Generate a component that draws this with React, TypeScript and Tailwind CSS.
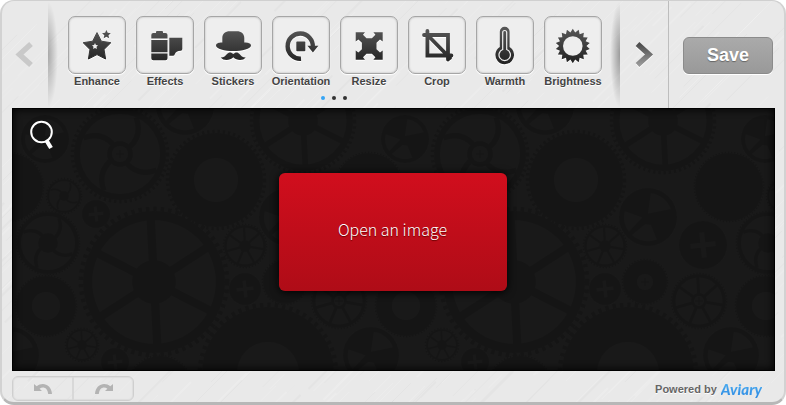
import React from "react";

const INK = "url(#ink)";

function starPoints(cx: number, cy: number, outer: number, inner: number) {
  return Array.from({ length: 10 }, (_, i) => {
    const r = i % 2 ? inner : outer;
    const a = -Math.PI / 2 + (i * Math.PI) / 5;
    return `${(cx + r * Math.cos(a)).toFixed(2)},${(cy + r * Math.sin(a)).toFixed(2)}`;
  }).join(" ");
}

function burstPoints(cx: number, cy: number, outer: number, inner: number, teeth: number) {
  return Array.from({ length: teeth * 2 }, (_, i) => {
    const r = i % 2 ? inner : outer;
    const a = -Math.PI / 2 + (i * Math.PI) / teeth;
    return `${(cx + r * Math.cos(a)).toFixed(2)},${(cy + r * Math.sin(a)).toFixed(2)}`;
  }).join(" ");
}

const tools: { name: string; art: React.ReactNode }[] = [
  {
    name: "Enhance",
    art: (
      <>
        <polygon points={starPoints(29, 31.2, 14.6, 7.4)} stroke={INK} strokeWidth="1" strokeLinejoin="round" />
        <polygon points={starPoints(38.4, 18.6, 4.6, 2.2)} />
        <polygon points={starPoints(27, 30.3, 3.2, 1.6)} fill="#eee" />
      </>
    ),
  },
  {
    name: "Effects",
    art: (
      <>
        <path d="M20 17v-1q0-1 1-1h5q1 0 1 1v1h2.500q2 0 2 2v3.600H15.300V19q0-2 2-2zM15.300 24h16.200v12.200H15.300zM15.300 37.500h16.200v4.700q0 2-2 2H17.300q-2 0-2-2z" />
        <path d="M33.300 21.700h13V33q0 1.700-1.500 1.700-5 0-6 3.500-.5 1.500-2 1.500h-3.500z" />
      </>
    ),
  },
  {
    name: "Stickers",
    art: (
      <>
        <path d="M18.300 26.500V22c0-4 3-6.700 7.500-6.700h7c4.500 0 7.500 2.700 7.500 6.700v4.500c2-.2 6.700.3 6.700 3 0 3.500-9 5.500-17.700 5.500S12 33 12 29.500c0-2.700 4.300-3.200 6.300-3z" />
        <path d="M29.300 38c2-2.200 4.700-2 6.200 0 1.500 2 3 3.400 6.200 3.400-2.500 3.500-9 3.300-12.400-.2-3.400 3.500-10 3.700-12.500.2 3.200 0 4.700-1.400 6.200-3.400 1.600-2 4.300-2.200 6.300 0z" />
      </>
    ),
  },
  {
    name: "Orientation",
    art: (
      <>
        <path d="M29 42.700A12.600 12.600 0 1 1 40.800 31" fill="none" stroke={INK} strokeWidth="4.400" />
        <path d="M35.400 29.800h11l-5.500 6.800z" />
        <rect x="24.300" y="25.600" width="9" height="9.600" rx=".8" />
      </>
    ),
  },
  {
    name: "Resize",
    art: (
      <path d="M15.700 16.300h9.300l-2 2.500 3.500 3.500h5.400l3.500-3.500-2-2.500h9.300v9.200l-2.700-2-3.500 3.300v6.400l3.500 3.300 2.700-2v9.200h-9.300l2-2.500-3.500-3.500h-5.400l-3.500 3.500 2 2.500h-9.300v-9.200l2.700 2 3.500-3.300v-6.400l-3.500-3.300-2.700 2z" />
    ),
  },
  {
    name: "Crop",
    art: (
      <path
        d="M19.400 15v24.500h24M16 19h24v24.500M19.500 19L42 42"
        fill="none"
        stroke={INK}
        strokeWidth="3.800"
        strokeLinecap="round"
      />
    ),
  },
  {
    name: "Warmth",
    art: (
      <>
        <path d="M23.800 31V15.700a4.900 4.900 0 0 1 9.800 0V31a9.300 9.300 0 1 1-9.800 0z" />
        <path
          d="M26.700 33.500V16.500a2 2 0 0 1 4 0V33.500a5.700 5.700 0 1 1-4 0z"
          fill="none"
          stroke="#eee"
          strokeWidth="1.200"
        />
      </>
    ),
  },
  {
    name: "Brightness",
    art: (
      <>
        <polygon points={burstPoints(28.8, 30, 17.2, 13.7, 18)} />
        <circle cx="28.800" cy="30" r="9.800" fill="#eee" />
      </>
    ),
  },
];

type Gear = {
  x: number;
  y: number;
  r: number;
  kind: "solid" | "spokes" | "curved" | "pie" | "plus";
  hole?: number;
  hub?: number;
  n?: number;
};

const gears: Gear[] = [
  { x: 45, y: 139, r: 24, kind: "pie" },
  { x: 120, y: 154, r: 46, kind: "curved", hub: 13, hole: 8 },
  { x: 185, y: 106, r: 29, kind: "pie" },
  { x: 216, y: 180, r: 47, kind: "solid", hole: 22 },
  { x: 9, y: 187, r: 34, kind: "solid" },
  { x: 64, y: 196, r: 17, kind: "curved", hub: 5 },
  { x: 96, y: 214, r: 14, kind: "plus" },
  { x: 48, y: 243, r: 31, kind: "curved", hub: 10 },
  { x: 154, y: 282, r: 71, kind: "spokes", n: 6, hub: 22 },
  { x: 245, y: 246, r: 21, kind: "spokes", n: 7, hub: 6 },
  { x: 245, y: 289, r: 16, kind: "plus" },
  { x: 46, y: 306, r: 30, kind: "solid", hole: 14 },
  { x: 11, y: 355, r: 28, kind: "pie" },
  { x: 82, y: 345, r: 16, kind: "spokes", n: 7, hub: 5 },
  { x: 115, y: 362, r: 14, kind: "plus" },
  { x: 160, y: 388, r: 32, kind: "solid" },
  { x: 268, y: 373, r: 66, kind: "solid", hole: 31 },
  { x: 303, y: 121, r: 50, kind: "spokes", n: 6, hub: 15 },
  { x: 288, y: 217, r: 29, kind: "pie" },
  { x: 343, y: 245, r: 24, kind: "plus" },
  { x: 285, y: 282, r: 22, kind: "solid", hole: 8 },
  { x: 339, y: 301, r: 27, kind: "spokes", n: 7, hub: 8, hole: 5 },
];

const DARK = "#151515";
const BASE = "#191919";

function GearShape({ x, y, r, kind, hole, hub = 0, n = 4 }: Gear) {
  const toothed = kind !== "pie" && kind !== "plus";
  const depth = r > 60 ? 5 : r > 40 ? 4 : 2;
  const rim = r * 0.87;
  const spokeWidth = Math.max(2, r * 0.12);
  const pitch = r > 60 ? 7.2 : r > 40 ? 5 : 3;
  const teeth = Math.round((2 * Math.PI * r) / pitch);
  const step = (2 * Math.PI * (r + depth / 2)) / teeth;
  return (
    <g transform={`translate(${x} ${y})`}>
      {toothed && (
        <circle
          r={r + depth / 2 - 0.5}
          fill="none"
          stroke={DARK}
          strokeWidth={depth}
          strokeDasharray={`${step * 0.5} ${step * 0.5}`}
        />
      )}
      <circle r={r} fill={DARK} />
      {(kind === "spokes" || kind === "curved") && <circle r={rim} fill={BASE} />}
      {kind === "spokes" &&
        Array.from({ length: n }, (_, i) => (
          <path
            key={i}
            d={`M0 0V${-rim - 1}`}
            stroke={DARK}
            strokeWidth={spokeWidth}
            transform={`rotate(${(i * 360) / n - 3})`}
          />
        ))}
      {kind === "curved" &&
        Array.from({ length: 4 }, (_, i) => (
          <path
            key={i}
            d={`M0 0Q${rim * 0.62} ${-rim * 0.35} ${rim * 0.4} ${-rim * 0.92}`}
            fill="none"
            stroke={DARK}
            strokeWidth={spokeWidth}
            transform={`rotate(${i * 90})`}
          />
        ))}
      {kind === "pie" && (
        <g fill={BASE}>
          <path d={`M0 ${-r * 0.12}L${r * 0.1} ${-r * 0.82}A${r * 0.83} ${r * 0.83} 0 0 1 ${r * 0.78} ${-r * 0.28}z`} />
          <path d={`M${-r * 0.2} ${r * 0.02}L${-r * 0.8} ${-r * 0.2}A${r * 0.83} ${r * 0.83} 0 0 0 ${-r * 0.66} ${r * 0.5}z`} />
          <path d={`M${-r * 0.1} ${r * 0.25}L${-r * 0.55} ${r * 0.62}A${r * 0.83} ${r * 0.83} 0 0 0 ${r * 0.3} ${r * 0.78}L${r * 0.1} ${r * 0.28}z`} />
        </g>
      )}
      {kind === "plus" && (
        <path
          d={`M0 ${-r * 0.52}V${r * 0.52}M${-r * 0.52} 0H${r * 0.52}`}
          stroke={BASE}
          strokeWidth={r * 0.2}
          transform="rotate(-6)"
        />
      )}
      {hub > 0 && <circle r={hub} fill={DARK} />}
      {hole && <circle r={hole} fill={BASE} />}
      {hole && hole < 10 && <path d="M0 -4V4M-4 0H4" stroke={DARK} />}
    </g>
  );
}

function GearWallpaper() {
  return (
    <svg aria-hidden="true" className="absolute inset-0 h-full w-full">
      <defs>
        <pattern id="gears" x="-12" y="-108" width="360" height="420" patternUnits="userSpaceOnUse">
          {[-360, 0, 360].map((dx) => (
            <g key={dx} transform={`translate(${dx} 0)`}>
              {gears.map((g, i) => (
                <GearShape key={i} {...g} />
              ))}
            </g>
          ))}
        </pattern>
      </defs>
      <rect width="100%" height="100%" fill="url(#gears)" />
    </svg>
  );
}

function noise(n: number) {
  const v = Math.sin(n * 127.1) * 43758.5453;
  return v - Math.floor(v);
}

const streaks = Array.from({ length: 700 }, (_, i) => ({
  x: Math.round(noise(i + 1) * 820 - 30),
  y: Math.round(noise(i + 1001) * 450),
  len: 10 + Math.round(noise(i + 2001) * 45),
  light: noise(i + 3001) > 0.35,
}));

function BrushedMetal() {
  return (
    <svg
      aria-hidden="true"
      className="absolute inset-0 h-full w-full"
      viewBox="0 0 786 405"
      preserveAspectRatio="xMidYMid slice"
    >
      {streaks.map((s, i) => (
        <path
          key={i}
          d={`M${s.x} ${s.y}l${s.len} ${-s.len}`}
          stroke={s.light ? "#fff" : "#bbb"}
          strokeOpacity={s.light ? 0.17 : 0.1}
          strokeWidth={i % 5 === 0 ? 2 : 1}
        />
      ))}
    </svg>
  );
}

export default function App() {
  return (
    <div className="relative isolate flex min-h-screen w-full flex-col overflow-hidden rounded-[14px] border-x-2 border-t border-b-3 border-x-[#d2d2d2] border-t-[#d0d0d0] border-b-[#b7b7b7] bg-[#e9e9e9] font-['Liberation_Sans',Arial,sans-serif]">
      <div className="absolute inset-0 -z-10">
        <BrushedMetal />
      </div>
      <svg aria-hidden="true" className="absolute size-0">
        <defs>
          <linearGradient id="ink" gradientUnits="userSpaceOnUse" x1="0" y1="14" x2="0" y2="45">
            <stop offset="0" stopColor="#555" />
            <stop offset="1" stopColor="#252525" />
          </linearGradient>
          <linearGradient id="chevron" x1="0" y1="0" x2="0" y2="1">
            <stop offset="0" stopColor="#4c4c4c" />
            <stop offset="1" stopColor="#999" />
          </linearGradient>
        </defs>
      </svg>

      <header className="flex h-[107px] shrink-0">
        <button type="button" aria-label="Previous tools" disabled className="flex w-[46px] shrink-0 items-center pl-3">
          <svg width="20" height="28" viewBox="0 0 20 28">
            <path d="M17 3L5.500 13.500 17 24" fill="none" stroke="#c9c9c9" strokeWidth="5.500" />
          </svg>
        </button>

        <div className="relative flex min-w-0 flex-1 flex-col items-center pt-[15px] pl-0.5">
          <span className="absolute inset-y-0 left-0 w-2.5 bg-[radial-gradient(ellipse_at_left,rgba(0,0,0,0.28),transparent_70%)]" />
          <span className="absolute inset-y-0 right-0 w-2.5 bg-[radial-gradient(ellipse_at_right,rgba(0,0,0,0.34),transparent_70%)]" />
          <nav aria-label="Editing tools" className="flex gap-2.5">
            {tools.map((tool) => (
              <button key={tool.name} type="button" className="flex w-[58px] flex-col items-center">
                <span className="size-[58px] rounded-[7px] border border-[#a6a6a6] bg-[#eee] shadow-[0_1px_1px_#fff,inset_0_0_2px_#aaa]">
                  <svg
                    width="56"
                    height="56"
                    viewBox="1 1 56 56"
                    fill={INK}
                    className="drop-shadow-[0_1px_0_#fff]"
                  >
                    {tool.art}
                  </svg>
                </span>
                <span className="text-[11px] leading-[14px] font-bold whitespace-nowrap text-[#444] [text-shadow:0_1px_0_#fff]">
                  {tool.name}
                </span>
              </button>
            ))}
          </nav>
          <div className="mt-2 flex gap-[7px] pr-0.5">
            <button type="button" aria-label="Page 1" className="size-1 rounded-full bg-[#36a5f5]" />
            <button type="button" aria-label="Page 2" className="size-1 rounded-full bg-[#333]" />
            <button type="button" aria-label="Page 3" className="size-1 rounded-full bg-[#333]" />
          </div>
        </div>

        <button
          type="button"
          aria-label="Next tools"
          className="flex w-[49px] shrink-0 items-center justify-center border-r border-[#bdbdbd]"
        >
          <svg width="20" height="28" viewBox="0 0 20 28" className="drop-shadow-[0_1px_0_#fff]">
            <path d="M3.500 3L15 13.500 3.500 24" fill="none" stroke="url(#chevron)" strokeWidth="5.500" />
          </svg>
        </button>

        <div className="flex w-[115px] shrink-0 items-center justify-end pt-0.5 pr-[11px]">
          <button
            type="button"
            className="h-[37px] w-[90px] rounded-md border border-[#8b8b8b] bg-linear-to-b from-[#aaa] to-[#999] pb-0.5 text-[18px] leading-6 font-bold text-white shadow-[0_1px_0_#fff] [text-shadow:0_1px_1px_#666]"
          >
            Save
          </button>
        </div>
      </header>

      <main className="relative mr-[9px] ml-2.5 flex min-h-[263px] flex-1 items-center justify-center bg-[#191919] pr-0.5 pb-4">
        <GearWallpaper />
        <div className="absolute inset-0 border border-black shadow-[inset_0_0_8px_#000]" />
        <button type="button" aria-label="Zoom" className="absolute top-3 left-[17px]">
          <svg width="26" height="30" viewBox="0 0 26 30" fill="none" stroke="#fff">
            <circle cx="12.500" cy="12" r="10.300" strokeWidth="2" />
            <path d="M17.500 20.500l4.500 7.500" strokeWidth="4.200" />
          </svg>
        </button>
        <button
          type="button"
          className="relative h-[118px] w-[228px] rounded-md bg-linear-to-b from-[#d10e1d] to-[#af0c17] pb-1.5 font-['Noto_Sans_CJK_SC',sans-serif] text-[16px] leading-6 font-light text-white shadow-[0_1px_8px_#000] [text-shadow:0_1px_1px_#600]"
        >
          Open an image
        </button>
      </main>

      <footer className="flex h-[31px] shrink-0 items-center justify-between pr-[22px] pl-2.5">
        <div className="mt-1 flex h-[25px] w-[122px] overflow-hidden rounded-md border border-[#cfcfcf] shadow-[inset_0_0_1px_1px_#ddd]">
          <button
            type="button"
            aria-label="Undo"
            disabled
            className="flex flex-1 items-center justify-center border-r-2 border-[#d8d8d8]"
          >
            <svg width="20" height="12" viewBox="0 0 20 12">
              <path d="M1 1v7h8L6.600 5.700C10 3.200 14.500 4.500 15.200 11H19C18.500 1.500 9.500-1.500 3.700 3.300z" fill="#b3b3b3" />
            </svg>
          </button>
          <button type="button" aria-label="Redo" disabled className="flex flex-1 items-center justify-center">
            <svg width="20" height="12" viewBox="0 0 20 12">
              <path d="M19 1v7h-8l2.400-2.300C10 3.200 5.500 4.500 4.800 11H1C1.500 1.500 10.500-1.500 16.300 3.300z" fill="#b3b3b3" />
            </svg>
          </button>
        </div>
        <p className="flex items-center gap-1 pt-1 text-[11px] leading-4 font-bold text-[#666] [text-shadow:0_1px_0_#fff]">
          Powered by
          <a
            href="#aviary"
            className="bg-linear-to-b from-[#55b7f5] to-[#2b86e0] bg-clip-text font-['Lato',sans-serif] text-[15px] leading-5 font-black text-transparent italic [text-shadow:none]"
          >
            Aviary
          </a>
        </p>
      </footer>
    </div>
  );
}
